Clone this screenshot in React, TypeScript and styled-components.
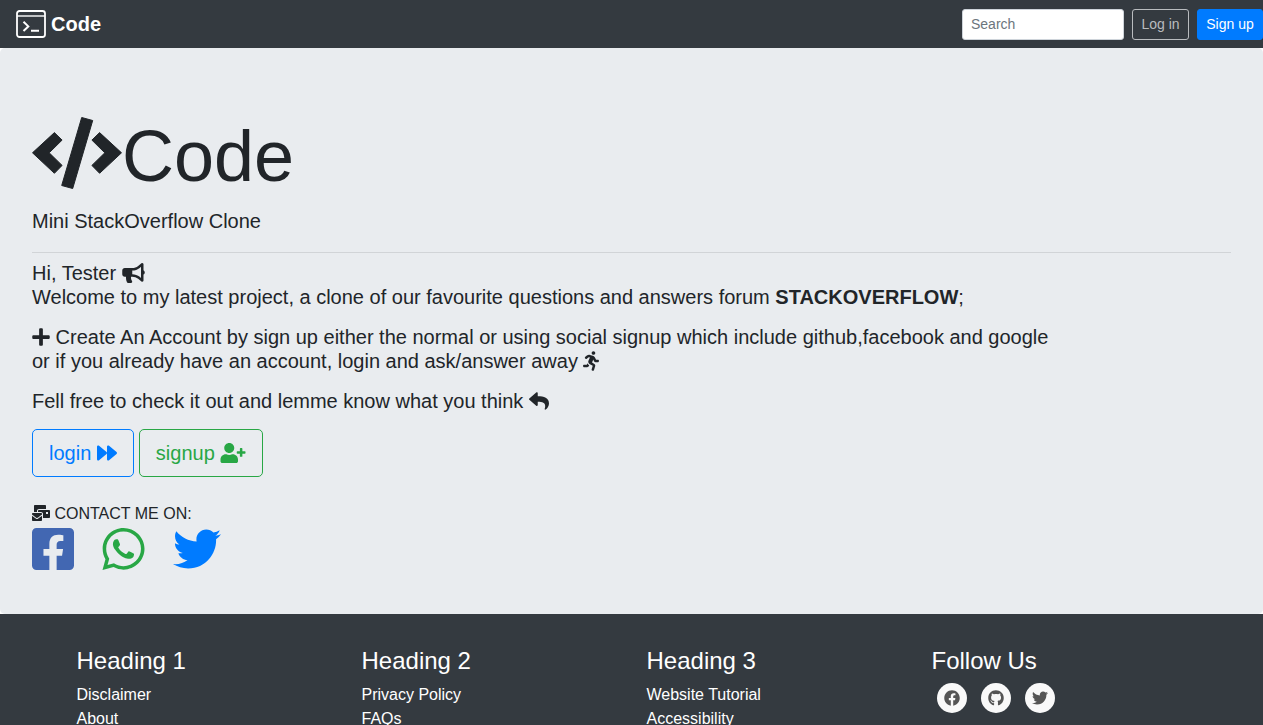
import React from "react";
import styled, { createGlobalStyle } from "styled-components";
import {
  FaBullhorn,
  FaFacebook,
  FaFacebookSquare,
  FaForward,
  FaGithub,
  FaMailBulk,
  FaPlus,
  FaReply,
  FaRunning,
  FaTwitter,
  FaUserPlus,
  FaWhatsapp,
} from "react-icons/fa";

const GlobalStyle = createGlobalStyle`
  *, *::before, *::after { box-sizing: border-box; }
  body {
    margin: 0;
    background: #fff;
    color: #212529;
    font-family: "Liberation Sans", Arial, sans-serif;
    font-size: 16px;
    line-height: 24px;
  }
  a { text-decoration: none; }
  h1, h2, p, ul { margin: 0; padding: 0; font-weight: 400; }
`;

const Navbar = styled.header`
  display: flex;
  align-items: center;
  justify-content: space-between;
  min-height: 48px;
  padding-left: 16px;
  background: #343a40;
`;

const Brand = styled.a`
  display: flex;
  align-items: center;
  gap: 5px;
  color: #fff;
  font-size: 20px;
  font-weight: 700;
`;

const NavForm = styled.form`
  display: flex;
  gap: 8px;
`;

const SearchInput = styled.input`
  width: 162px;
  height: 31px;
  padding: 4px 8px;
  border: 1px solid #ced4da;
  border-radius: 3px;
  background: #fff;
  color: #495057;
  font: 14px/21px "Liberation Sans", Arial, sans-serif;
  &::placeholder { color: #6c757d; opacity: 1; }
`;

const NavButton = styled.button<{ $primary?: boolean }>`
  min-width: ${(p) => (p.$primary ? 66 : 57)}px;
  height: 31px;
  padding: 4px 8px;
  border: 1px solid ${(p) => (p.$primary ? "#007bff" : "#b9bcbf")};
  border-radius: 3px;
  background: ${(p) => (p.$primary ? "#007bff" : "transparent")};
  color: ${(p) => (p.$primary ? "#fff" : "#b9bcbf")};
  font: 14px/21px "Liberation Sans", Arial, sans-serif;
  white-space: nowrap;
`;

const Hero = styled.main`
  padding: 64px 32px 41px;
  border-radius: 5px;
  background: #e9ecef;
`;

const Title = styled.h1`
  display: flex;
  align-items: center;
  margin-bottom: 6px;
  font-size: 72px;
  line-height: 88px;
  svg { width: 90px; height: 72px; margin-top: -6px; }
`;

const Lead = styled.p`
  font-size: 20px;
  line-height: 30px;
`;

const Divider = styled.hr`
  margin: 16px 0 8px;
  border: 0;
  border-top: 1px solid #d1d4d7;
`;

const Copy = styled.p`
  margin-bottom: 16px;
  font-size: 20px;
  line-height: 24px;
`;

const Glyph = styled.span<{ $w: number; $h: number }>`
  svg {
    width: ${(p) => p.$w}px;
    height: ${(p) => p.$h}px;
    vertical-align: ${(p) => (p.$h > 16 ? -3 : -2)}px;
  }
`;

const Actions = styled.div`
  display: flex;
  gap: 5px;
  margin-bottom: 24px;
`;

const ActionButton = styled.button<{ $color: string }>`
  height: 48px;
  padding: 8px 16px;
  border: 1px solid ${(p) => p.$color};
  border-radius: 5px;
  background: transparent;
  color: ${(p) => p.$color};
  font: 20px/30px "Liberation Sans", Arial, sans-serif;
`;

const ContactLabel = styled.p`
  line-height: 26px;
`;

const SocialRow = styled.div`
  display: flex;
  gap: 28px;
  margin-top: -2px;
`;

const SocialLink = styled.a<{ $color: string; $w: number }>`
  display: flex;
  color: ${(p) => p.$color};
  svg { width: ${(p) => p.$w}px; height: 48px; }
`;

const Footer = styled.footer`
  padding: 32px 0;
  background: #343a40;
  color: #fff;
`;

const Columns = styled.div`
  display: grid;
  grid-template-columns: repeat(4, 1fr);
  max-width: 1140px;
  margin: 0 auto;
`;

const Column = styled.section`
  padding: 0 15px;
`;

const ColumnTitle = styled.h2`
  margin-bottom: 8px;
  font-size: 24px;
  line-height: 29px;
`;

const LinkList = styled.ul`
  list-style: none;
  a { color: #fff; }
`;

const Circles = styled.div`
  display: flex;
  gap: 14px;
  padding: 0 5px;
`;

const Circle = styled.a`
  display: flex;
  align-items: center;
  justify-content: center;
  width: 30px;
  height: 30px;
  border-radius: 50%;
  background: #f9f9f9;
  color: #555;
  svg { width: 16px; height: 16px; }
`;

const TerminalLogo = () => (
  <svg width="30" height="28" viewBox="0 0 30 28" fill="none" stroke="#fff" aria-hidden="true">
    <rect x="1" y="1" width="28" height="26" rx="2.5" strokeWidth="1.8" />
    <path d="M1 6H29" strokeWidth="1.4" />
    <path d="M7.5 11.8l4.8 4.6-4.8 4.6M15 20.8h8" strokeWidth="2" />
  </svg>
);

const CodeIcon = () => (
  <svg
    width="90"
    height="72"
    viewBox="0 0 90 72"
    fill="currentColor"
    stroke="currentColor"
    strokeWidth="1"
    strokeLinejoin="round"
    aria-hidden="true"
  >
    <path d="M.5 35.8L22.4 15.6l7.7 7.5L17.2 35.8l12.9 12.6-7.7 7.9z" />
    <path d="M89.5 35.8L67.6 15.6l-7.7 7.5 12.9 12.7-12.9 12.6 7.7 7.9z" />
    <path d="M49.7.5l11 3L40.7 71.5l-11-3z" />
  </svg>
);

const footerColumns = [
  { title: "Heading 1", links: ["Disclaimer", "About"] },
  { title: "Heading 2", links: ["Privacy Policy", "FAQs"] },
  { title: "Heading 3", links: ["Website Tutorial", "Accessibility"] },
];

export default function App() {
  return (
    <>
      <GlobalStyle />
      <Navbar>
        <Brand href="#">
          <TerminalLogo />
          Code
        </Brand>
        <NavForm onSubmit={(e) => e.preventDefault()}>
          <SearchInput type="search" placeholder="Search" aria-label="Search" />
          <NavButton type="button">Log in</NavButton>
          <NavButton type="button" $primary>Sign up</NavButton>
        </NavForm>
      </Navbar>

      <Hero>
        <Title><CodeIcon />Code</Title>
        <Lead>Mini StackOverflow Clone</Lead>
        <Divider />
        <Copy>
          Hi, Tester <Glyph $w={23} $h={20}><FaBullhorn /></Glyph>
          <br />
          Welcome to my latest project, a clone of our favourite questions and answers forum{" "}
          <strong>STACKOVERFLOW</strong>;
        </Copy>
        <Copy>
          <Glyph $w={18} $h={20}><FaPlus /></Glyph> Create An Account by sign up either the normal or
          using social signup which include github,facebook and google
          <br />
          or if you already have an account, login and ask/answer away{" "}
          <Glyph $w={16} $h={20}><FaRunning /></Glyph>
        </Copy>
        <Copy>
          Fell free to check it out and lemme know what you think{" "}
          <Glyph $w={20} $h={20}><FaReply /></Glyph>
        </Copy>
        <Actions>
          <ActionButton type="button" $color="#007bff">
            login <Glyph $w={20} $h={20}><FaForward /></Glyph>
          </ActionButton>
          <ActionButton type="button" $color="#28a745">
            signup <Glyph $w={26} $h={20}><FaUserPlus /></Glyph>
          </ActionButton>
        </Actions>
        <ContactLabel>
          <Glyph $w={18} $h={16}><FaMailBulk /></Glyph> CONTACT ME ON:
        </ContactLabel>
        <SocialRow>
          <SocialLink href="#" aria-label="Facebook" $color="#4267b2" $w={42}><FaFacebookSquare /></SocialLink>
          <SocialLink href="#" aria-label="WhatsApp" $color="#28a745" $w={43}><FaWhatsapp /></SocialLink>
          <SocialLink href="#" aria-label="Twitter" $color="#007bff" $w={48}><FaTwitter /></SocialLink>
        </SocialRow>
      </Hero>

      <Footer>
        <Columns>
          {footerColumns.map((col) => (
            <Column key={col.title}>
              <ColumnTitle>{col.title}</ColumnTitle>
              <LinkList>
                {col.links.map((l) => (
                  <li key={l}><a href="#">{l}</a></li>
                ))}
              </LinkList>
            </Column>
          ))}
          <Column>
            <ColumnTitle>Follow Us</ColumnTitle>
            <Circles>
              <Circle href="#" aria-label="Facebook"><FaFacebook /></Circle>
              <Circle href="#" aria-label="GitHub"><FaGithub /></Circle>
              <Circle href="#" aria-label="Twitter"><FaTwitter /></Circle>
            </Circles>
          </Column>
        </Columns>
      </Footer>
    </>
  );
}
